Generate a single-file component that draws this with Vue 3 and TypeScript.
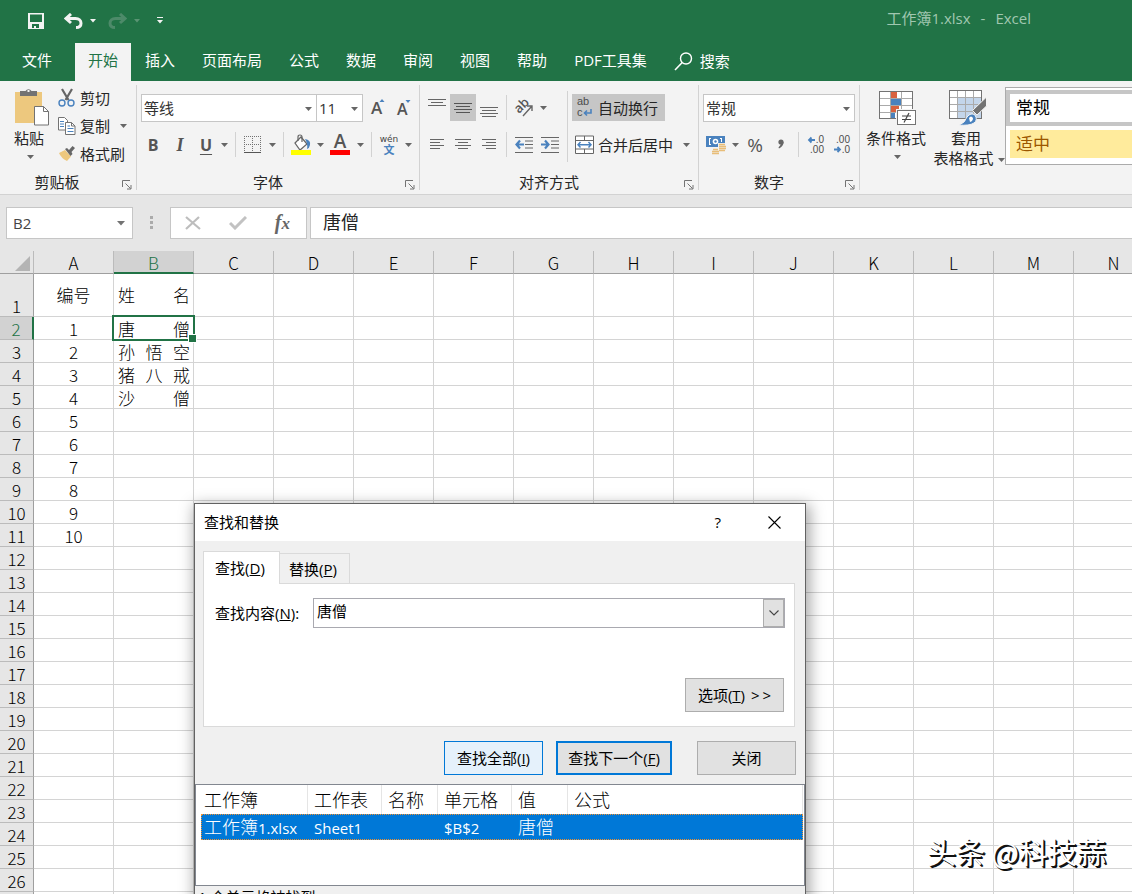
<script setup lang="ts">
import { ref } from 'vue'

const menuTabs: string[] = ['开始', '插入', '页面布局', '公式', '数据', '审阅', '视图', '帮助', 'PDF工具集']
const activeTab = ref('开始')

const columns: string[] = 'ABCDEFGHIJKLMN'.split('')
const names: Record<number, string> = { 1: '姓名', 2: '唐僧', 3: '孙悟空', 4: '猪八戒', 5: '沙僧' }
const rows: number[] = Array.from({ length: 27 }, (_, i) => i + 1)

function cellText(row: number, col: string): string {
  if (col === 'A') {
    if (row === 1) return '编号'
    return row <= 11 ? String(row - 1) : ''
  }
  return col === 'B' ? names[row] ?? '' : ''
}

const font = ref('等线')
const fontSize = ref('11')
const numberFormat = ref('常规')
const formula = ref('唐僧')
const keyword = ref('唐僧')
</script>

<template>
  <div class="app">
    <header class="titlebar">
      <div class="quick">
        <button class="q save" aria-label="保存">
          <svg width="16" height="16" viewBox="0 0 16 16"><path d="M0 0h16v16H0z M2 1.500v7.500h12V1.500z M4 11v4h2v-2h2v2h3v-4z" fill="#f3f3f3" fill-rule="evenodd" /></svg>
        </button>
        <button class="q undo" aria-label="撤销">
          <svg width="19" height="16" viewBox="0 0 19 16"><path d="M7 1L2 5.500L7 10M3 5.500H11.500C15 5.500 17 7.500 17 10.200C17 13 15 14.500 12 14.500" fill="none" stroke="#f3f3f3" stroke-width="3" /></svg>
        </button>
        <svg class="caret" width="6" height="4" viewBox="0 0 6 4"><path d="M0 0h6L3 3.500z" fill="#f3f3f3" /></svg>
        <button class="q redo" aria-label="恢复">
          <svg width="19" height="16" viewBox="0 0 19 16"><path d="M12 1L17 5.500L12 10M16 5.500H7.500C4 5.500 2 7.500 2 10.200C2 13 4 14.500 7 14.500" fill="none" stroke="#4d8a69" stroke-width="3" /></svg>
        </button>
        <svg class="caret" width="6" height="4" viewBox="0 0 6 4"><path d="M0 0h6L3 3.500z" fill="#5a9473" /></svg>
        <button class="q more" aria-label="自定义快速访问工具栏">
          <svg width="6" height="7" viewBox="0 0 6 7"><path d="M0 0h6v1H0zM0 3h6L3 6.500z" fill="#f3f3f3" /></svg>
        </button>
      </div>
      <div class="doc"><span>工作簿1.xlsx</span><span>-</span><span>Excel</span></div>
    </header>

    <nav class="tabs">
      <button class="tab file">文件</button>
      <button v-for="t in menuTabs" :key="t" class="tab" :class="{ active: t === activeTab }" @click="activeTab = t">{{ t }}</button>
      <button class="tab search">
        <svg width="19" height="19" viewBox="0 0 19 19"><circle cx="12" cy="6.500" r="5.500" fill="none" stroke="#fff" stroke-width="1.400" /><path d="M8.200 10.500L1 18" stroke="#fff" stroke-width="1.600" /></svg>
        搜索
      </button>
    </nav>

    <section class="ribbon">
      <div class="group">
        <div class="body clip">
          <button class="big paste">
            <svg width="36" height="38" viewBox="0 0 36 38">
              <rect x="1" y="4" width="27" height="31" fill="#edc87e" />
              <path d="M6 3h5.500a3.500 3.500 0 0 1 6 0H23v5H6z" fill="#737373" /><rect x="13.500" y="2" width="2" height="2" fill="#f3f3f3" />
              <path d="M20.500 18.500h9l5 5v13.500h-14z" fill="#fff" stroke="#737373" /><path d="M29.500 18.500v5h5" fill="none" stroke="#737373" />
            </svg>
            <span>粘贴</span>
            <svg class="dn" width="7" height="4" viewBox="0 0 7 4"><path d="M0 0h7L3.500 4z" fill="#666" /></svg>
          </button>
          <div class="stack">
            <button class="line">
              <svg width="18" height="20" viewBox="0 0 18 20"><path d="M4 1l6.500 11M14 1L7.500 12" stroke="#666" stroke-width="2.200" fill="none" /><circle cx="4" cy="15" r="3" fill="none" stroke="#4a82be" stroke-width="1.400" /><circle cx="13" cy="15" r="3" fill="none" stroke="#4a82be" stroke-width="1.400" /></svg>
              <span>剪切</span>
            </button>
            <button class="line">
              <svg width="18" height="20" viewBox="0 0 18 20"><path d="M.5 1.500h6l3 3v9.500h-9z" fill="#fff" stroke="#737373" /><path d="M2 5.500h4M2 8h4M2 10.500h4" stroke="#4a82be" /><path d="M7.500 6.500h6l3.500 3.500v8.500H7.500z" fill="#fff" stroke="#737373" /><path d="M13.500 6.500V10H17" fill="none" stroke="#737373" /><path d="M9.500 10h2.500M9.500 12.500h6M9.500 15.500h6" stroke="#4a82be" /></svg>
              <span>复制</span>
              <svg class="dn" width="7" height="4" viewBox="0 0 7 4"><path d="M0 0h7L3.500 4z" fill="#666" /></svg>
            </button>
            <button class="line">
              <svg width="18" height="20" viewBox="0 0 18 20"><path d="M1 9l6-3 6 6.500-4 4.500q-6-3-8-8z" fill="#edc87e" /><path d="M7 5l2-1 2 2 3.500-4 2.500 2-3.500 4 1 2-2 2z" fill="#666" /></svg>
              <span>格式刷</span>
            </button>
          </div>
        </div>
        <div class="foot"><span class="lab">剪贴板</span><button class="launch" aria-label="剪贴板设置"><svg width="10" height="10" viewBox="0 0 10 10"><path d="M.5 7V.5H8M3.500 3.500l5 5M9 5v4H5" fill="none" stroke="#737373" /></svg></button></div>
      </div>

      <div class="group g-font">
        <div class="body">
          <div class="row">
            <span class="sel s-font"><select v-model="font" aria-label="字体"><option>等线</option></select><svg width="7" height="4" viewBox="0 0 7 4"><path d="M0 0h7L3.500 4z" fill="#666" /></svg></span>
            <span class="sel s-size"><select v-model="fontSize" aria-label="字号"><option>11</option></select><svg width="7" height="4" viewBox="0 0 7 4"><path d="M0 0h7L3.500 4z" fill="#666" /></svg></span>
            <button class="t grow" aria-label="增大字号"><svg width="16" height="20" viewBox="0 0 16 20"><text x="0" y="16" class="it" font-size="17">A</text><path d="M8.500 4h5L11 1z" fill="#4a82be" /></svg></button>
            <button class="t" aria-label="减小字号"><svg width="16" height="20" viewBox="0 0 16 20"><text x="0" y="17" class="it" font-size="16">A</text><path d="M8.500 2h5L11 5z" fill="#4a82be" /></svg></button>
          </div>
          <div class="row">
            <button class="t b">B</button>
            <button class="t i w28">I</button>
            <button class="t u w24">U</button>
            <button class="a" aria-label="下划线选项"><svg width="7" height="4" viewBox="0 0 7 4"><path d="M0 0h7L3.500 4z" fill="#666" /></svg></button>
            <i class="sep" />
            <button class="t" aria-label="边框"><svg width="18" height="18" viewBox="0 0 18 18"><path d="M.5 0v16M8.500 0v16M16.500 0v16M0 .5h17M0 8.500h17" stroke="#737373" stroke-dasharray="1 1" /><path d="M0 16.500h17" stroke="#555" /></svg></button>
            <button class="a" aria-label="边框选项"><svg width="7" height="4" viewBox="0 0 7 4"><path d="M0 0h7L3.500 4z" fill="#666" /></svg></button>
            <i class="sep" />
            <button class="t" aria-label="填充颜色"><svg width="20" height="22" viewBox="0 0 20 22"><path d="M4 9l6-6 6 7-7 6z" fill="#fff" stroke="#666" stroke-width="1.200" /><path d="M7 7V3q0-2 2-2t2 2v5" fill="none" stroke="#666" stroke-width="1.200" /><path d="M14 5q6 1 5 6-.5 3-3 4 1-5-2-10z" fill="#4a82be" /><rect y="16" width="20" height="5" fill="#ff0" /></svg></button>
            <button class="a" aria-label="填充颜色选项"><svg width="7" height="4" viewBox="0 0 7 4"><path d="M0 0h7L3.500 4z" fill="#666" /></svg></button>
            <button class="t w28" aria-label="字体颜色"><svg width="20" height="22" viewBox="0 0 20 22"><text x="10" y="14" text-anchor="middle" class="it" font-size="19">A</text><rect y="16" width="20" height="5" fill="#f00" /></svg></button>
            <button class="a" aria-label="字体颜色选项"><svg width="7" height="4" viewBox="0 0 7 4"><path d="M0 0h7L3.500 4z" fill="#666" /></svg></button>
            <i class="sep" />
            <button class="t" aria-label="拼音"><svg width="18" height="22" viewBox="0 0 18 22"><text x="9" y="8" text-anchor="middle" font-size="9" class="py">wén</text><text x="9" y="20" text-anchor="middle" font-size="11" fill="#4a82be" font-weight="700">文</text></svg></button>
            <button class="a" aria-label="拼音选项"><svg width="7" height="4" viewBox="0 0 7 4"><path d="M0 0h7L3.500 4z" fill="#666" /></svg></button>
          </div>
        </div>
        <div class="foot"><span class="lab">字体</span><button class="launch" aria-label="字体设置"><svg width="10" height="10" viewBox="0 0 10 10"><path d="M.5 7V.5H8M3.500 3.500l5 5M9 5v4H5" fill="none" stroke="#737373" /></svg></button></div>
      </div>

      <div class="group g-align">
        <div class="body cols">
          <div class="col">
            <div class="row">
              <button class="t" aria-label="顶端对齐"><svg width="18" height="24" viewBox="0 0 18 24"><path d="M0 3.500h18M3 6.500h12M0 9.500h18" stroke="#666" /></svg></button>
              <button class="t on" aria-label="垂直居中"><svg width="18" height="24" viewBox="0 0 18 24"><path d="M0 7.500h18M2 10.500h14M0 13.500h18M2 16.500h14" stroke="#555" /></svg></button>
              <button class="t" aria-label="底端对齐"><svg width="18" height="24" viewBox="0 0 18 24"><path d="M0 11.500h18M2 14.500h14M0 17.500h18M2 20.500h14" stroke="#666" /></svg></button>
              <i class="sep" />
              <button class="t" aria-label="方向"><svg width="20" height="20" viewBox="0 0 20 20"><text transform="translate(5 16) rotate(-45)" font-size="13" class="it">ab</text><path d="M9 18L18 8M18 13V8h-5" fill="none" stroke="#666" stroke-width="1.400" /></svg></button>
              <button class="a" aria-label="方向选项"><svg width="7" height="4" viewBox="0 0 7 4"><path d="M0 0h7L3.500 4z" fill="#666" /></svg></button>
            </div>
            <div class="row">
              <button class="t" aria-label="左对齐"><svg width="14" height="14" viewBox="0 0 14 14"><path d="M0 1.500h14M0 4.500h10M0 7.500h14M0 10.500h10" stroke="#666" /></svg></button>
              <button class="t" aria-label="居中"><svg width="16" height="14" viewBox="0 0 16 14"><path d="M0 1.500h16M3 4.500h10M0 7.500h16M3 10.500h10" stroke="#666" /></svg></button>
              <button class="t" aria-label="右对齐"><svg width="14" height="14" viewBox="0 0 14 14"><path d="M0 1.500h14M4 4.500h10M0 7.500h14M4 10.500h10" stroke="#666" /></svg></button>
              <i class="sep" />
              <button class="t" aria-label="减少缩进"><svg width="18" height="18" viewBox="0 0 18 18"><path d="M0 1.500h18M10 5h8M10 8.500h8M10 12h8M0 16.500h18" stroke="#666" /><path d="M9 8.500H1.500M5 4.500L1.500 8.500 5 12.500" fill="none" stroke="#4a82be" stroke-width="2.200" /></svg></button>
              <button class="t" aria-label="增加缩进"><svg width="18" height="18" viewBox="0 0 18 18"><path d="M0 1.500h18M10 5h8M10 8.500h8M10 12h8M0 16.500h18" stroke="#666" /><path d="M0 8.500h7M4 4.500L7.500 8.500 4 12.500" fill="none" stroke="#4a82be" stroke-width="2.200" /></svg></button>
            </div>
          </div>
          <i class="tall" />
          <div class="col">
            <div class="row">
              <button class="wide on">
                <svg width="18" height="20" viewBox="0 0 18 20"><text x="2" y="7" font-size="11" class="it2">ab</text><text x="2" y="18" font-size="11" class="it2">c</text><path d="M16 11v4H9.500M12 12.500L9.500 15l2.500 2.500" fill="none" stroke="#4a82be" stroke-width="1.600" /></svg>
                <span>自动换行</span>
              </button>
            </div>
            <div class="row">
              <button class="wide">
                <svg width="18" height="20" viewBox="0 0 18 20"><path d="M.5 1h18v17.500H.5zM.5 5.500h18M.5 14h18M9.500 1v4.500M9.500 14v4.500" fill="#fff" stroke="#666" /><path d="M3 9.750h13M5.500 7L3 9.750 5.500 12.500M13.500 7L16 9.750 13.500 12.500" fill="none" stroke="#4a82be" stroke-width="1.500" /></svg>
                <span>合并后居中</span>
              </button>
              <button class="a" aria-label="合并选项"><svg width="7" height="4" viewBox="0 0 7 4"><path d="M0 0h7L3.500 4z" fill="#666" /></svg></button>
            </div>
          </div>
        </div>
        <div class="foot"><span class="lab">对齐方式</span><button class="launch" aria-label="对齐设置"><svg width="10" height="10" viewBox="0 0 10 10"><path d="M.5 7V.5H8M3.500 3.500l5 5M9 5v4H5" fill="none" stroke="#737373" /></svg></button></div>
      </div>

      <div class="group g-num">
        <div class="body">
          <div class="row">
            <span class="sel s-num"><select v-model="numberFormat" aria-label="数字格式"><option>常规</option></select><svg width="7" height="4" viewBox="0 0 7 4"><path d="M0 0h7L3.500 4z" fill="#666" /></svg></span>
          </div>
          <div class="row">
            <button class="t" aria-label="会计数字格式"><svg width="20" height="20" viewBox="0 0 20 20"><rect y="1" width="19" height="11" fill="#4a82be" /><path d="M3 3h2v1H4v5h1v1H3zM16 3h-2v1h1v3h1z" fill="#fff" /><circle cx="9.500" cy="6.500" r="2.800" fill="#fff" /><circle cx="9.500" cy="6.500" r="1.200" fill="#4a82be" /><path d="M12 8h8v12H6v-7h6z" fill="#f3f3f3" /><path d="M13 9.500h6M13 11.500h7M13 13.500h7M13 15.500h6M7 14.500h5M6 16.500h7M6 18.500h7" stroke="#e8bd78" stroke-width="1.400" /></svg></button>
            <button class="a" aria-label="会计格式选项"><svg width="7" height="4" viewBox="0 0 7 4"><path d="M0 0h7L3.500 4z" fill="#666" /></svg></button>
            <button class="t w28 pct">%</button>
            <button class="t w24" aria-label="千位分隔样式"><svg width="6" height="12" viewBox="0 0 6 12"><circle cx="3" cy="3" r="2.600" fill="#666" /><path d="M5.600 3Q5.500 7 1 9.500L.5 8.500Q3 6.500 3 4z" fill="#666" /></svg></button>
            <i class="sep" />
            <button class="t" aria-label="增加小数位数"><svg width="18" height="20" viewBox="0 0 18 20"><text x="17" y="8" text-anchor="end" font-size="10" class="it2">.0</text><text x="17" y="18" text-anchor="end" font-size="10" class="it2">.00</text><path d="M8 5H2M4.500 2.500L2 5 4.500 7.500" fill="none" stroke="#4a82be" stroke-width="1.800" /></svg></button>
            <button class="t" aria-label="减少小数位数"><svg width="18" height="20" viewBox="0 0 18 20"><text x="17" y="8" text-anchor="end" font-size="10" class="it2">.00</text><text x="17" y="18" text-anchor="end" font-size="10" class="it2">.0</text><path d="M1 14.500h6M4.500 12L7 14.500 4.500 17" fill="none" stroke="#4a82be" stroke-width="1.800" /></svg></button>
          </div>
        </div>
        <div class="foot"><span class="lab">数字</span><button class="launch" aria-label="数字设置"><svg width="10" height="10" viewBox="0 0 10 10"><path d="M.5 7V.5H8M3.500 3.500l5 5M9 5v4H5" fill="none" stroke="#737373" /></svg></button></div>
      </div>

      <div class="styles">
        <button class="big cond">
          <svg width="38" height="38" viewBox="0 0 38 38">
            <rect x=".5" y="3.500" width="33" height="27" fill="#fff" />
            <path d="M11 4h7v6h-7zM11 18h9v6h-9z" fill="#d9623f" /><path d="M11 11h11v6H11zM11 25h5v6h-5z" fill="#4a82be" />
            <path d="M11.500 3.500v27M22.500 3.500v27M.5 10.500h33M.5 17.500h33M.5 24.500h33" stroke="#aaa" fill="none" /><rect x=".5" y="3.500" width="33" height="27" fill="none" stroke="#737373" />
            <rect x="17" y="21" width="21" height="17" fill="#f3f3f3" /><rect x="18.500" y="22.500" width="18" height="14" fill="#fff" stroke="#737373" /><path d="M23 28h9M23 31.500h9M30 25l-5 9.500" stroke="#444" stroke-width="1.200" />
          </svg>
          <span>条件格式</span>
          <svg class="dn" width="7" height="4" viewBox="0 0 7 4"><path d="M0 0h7L3.500 4z" fill="#666" /></svg>
        </button>
        <button class="big tblfmt">
          <svg width="38" height="38" viewBox="0 0 38 38">
            <rect x=".5" y="2.500" width="32" height="28" fill="#fff" /><rect x="9" y="10" width="23" height="20" fill="#c3d5ea" />
            <path d="M8.500 2.500v28M16.500 2.500v28M24.500 2.500v28M.5 9.500h32M.5 16.500h32M.5 23.500h32" stroke="#aaa" fill="none" /><rect x=".5" y="2.500" width="32" height="28" fill="none" stroke="#737373" />
            <path d="M37.500 9v9L28 27l-4.500-4.500z" fill="#737373" stroke="#f3f3f3" /><path d="M10 37q6-2 8-8 4-5 8-2 3 5-1 8-5 3-15 2z" fill="#4a82be" stroke="#f3f3f3" /><path d="M20 30q2-3 4 0 0 3-3 4" fill="#fff" />
          </svg>
          <span>套用</span>
          <span class="second">表格格式<svg width="7" height="4" viewBox="0 0 7 4"><path d="M0 0h7L3.500 4z" fill="#666" /></svg></span>
        </button>
        <div class="gallery">
          <button class="style normal">常规</button>
          <button class="style neutral">适中</button>
        </div>
      </div>
    </section>

    <section class="fbar">
      <div class="namebox"><input value="B2" aria-label="名称框" /><svg width="8" height="5" viewBox="0 0 8 5"><path d="M0 0h8L4 4.500z" fill="#737373" /></svg></div>
      <svg class="dots" width="3" height="13" viewBox="0 0 3 13"><path d="M0 0h3v3H0zM0 5h3v3H0zM0 10h3v3H0z" fill="#ababab" /></svg>
      <div class="fx">
        <button aria-label="取消"><svg width="16" height="14" viewBox="0 0 16 14"><path d="M1 1l14 12M14 1L1 13" stroke="#bdbdbd" stroke-width="2.200" /></svg></button>
        <button aria-label="输入"><svg width="18" height="14" viewBox="0 0 18 14"><path d="M1 7l5 5L17 1" fill="none" stroke="#c2c2c2" stroke-width="3" /></svg></button>
        <button class="fxb">f<small>x</small></button>
      </div>
      <input v-model="formula" class="formula" aria-label="编辑栏" />
    </section>

    <main class="sheet">
      <table class="grid">
        <colgroup><col class="c0" /><col v-for="c in columns" :key="c" class="c1" /></colgroup>
        <thead>
          <tr>
            <th class="corner"><svg width="15" height="15" viewBox="0 0 15 15"><path d="M15 0v15H0z" fill="#b4b4b4" /></svg></th>
            <th v-for="c in columns" :key="c" :class="{ sel: c === 'B' }">{{ c }}</th>
          </tr>
        </thead>
        <tbody>
          <tr v-for="r in rows" :key="r" :class="{ first: r === 1 }">
            <th :class="{ sel: r === 2 }">{{ r < 27 ? r : '' }}</th>
            <td v-for="c in columns" :key="c" :class="{ name: c === 'B', cur: c === 'B' && r === 2 }">{{ cellText(r, c) }}<i v-if="c === 'B' && r === 2" class="box" /></td>
          </tr>
        </tbody>
      </table>
    </main>

    <div class="mark">头条 @科技蒜</div>

    <section class="dialog" role="dialog" aria-label="查找和替换">
      <div class="dtitle">
        <h2>查找和替换</h2>
        <button class="help">?</button>
        <button class="close" aria-label="关闭窗口"><svg width="13" height="13" viewBox="0 0 13 13"><path d="M.5 .5l12 12M12.500 .5l-12 12" stroke="#000" stroke-width="1.100" /></svg></button>
      </div>
      <div class="dtabs">
        <button class="dt sel">查找(<u>D</u>)</button>
        <button class="dt">替换(<u>P</u>)</button>
      </div>
      <div class="panel">
        <div class="field">
          <label for="kw">查找内容(<u>N</u>):</label>
          <div class="combo">
            <input id="kw" v-model="keyword" />
            <button aria-label="展开历史"><svg width="10" height="6" viewBox="0 0 10 6"><path d="M.5 .5L5 5 9.500 .5" fill="none" stroke="#444" stroke-width="1.100" /></svg></button>
          </div>
        </div>
        <button class="btn opt">选项(<u>T</u>) <span class="more-sign"><span>&gt;</span><span>&gt;</span></span></button>
      </div>
      <div class="actions">
        <button class="btn all">查找全部(<u>I</u>)</button>
        <button class="btn next">查找下一个(<u>F</u>)</button>
        <button class="btn shut">关闭</button>
      </div>
      <div class="list">
        <table>
          <colgroup><col class="k1" /><col class="k2" /><col class="k3" /><col class="k2" /><col class="k3" /><col /></colgroup>
          <thead><tr><th>工作簿</th><th>工作表</th><th>名称</th><th>单元格</th><th>值</th><th>公式</th></tr></thead>
          <tbody><tr><td>工作簿<span class="lat">1.xlsx</span></td><td><span class="lat">Sheet1</span></td><td></td><td><span class="lat">$B$2</span></td><td>唐僧</td><td></td></tr></tbody>
        </table>
      </div>
      <div class="status">1 个单元格被找到</div>
    </section>
  </div>
</template>

<style>
html,
body {
  margin: 0;
  overflow: hidden;
}
</style>

<style scoped>
.app {
  position: relative;
  display: flex;
  flex-direction: column;
  height: 100vh;
  overflow: hidden;
  background: #fff;
  color: #262626;
  font: 15px/20px "Open Sans", "Noto Sans CJK SC", sans-serif;
}
* {
  box-sizing: border-box;
}
button,
input,
select {
  margin: 0;
  padding: 0;
  border: 0;
  border-radius: 0;
  background: none;
  color: inherit;
  font: inherit;
  outline: 0;
}
svg {
  display: block;
  flex: none;
}
.titlebar {
  display: flex;
  flex: none;
  justify-content: space-between;
  height: 43px;
  padding: 0 101px 0 28px;
  background: #217346;
}
.quick {
  display: flex;
  align-items: center;
  height: 41px;
}
.save { margin-right: 20px; }
.undo, .redo { margin-right: 7px; }
.redo { margin-left: 12px; }
.more { margin-left: 17px; }
.doc {
  display: flex;
  gap: 10px;
  padding-top: 8px;
  color: #a0c7b0;
}
.tabs {
  display: flex;
  flex: none;
  gap: 1px;
  height: 38px;
  background: #217346;
}
.tab {
  padding: 0 13px 4px;
  color: #fff;
  white-space: nowrap;
}
.tab.file { width: 74px; }
.tab.active {
  background: #f3f3f3;
  color: #217346;
}
.tab.search {
  display: flex;
  align-items: center;
  gap: 7px;
  padding-bottom: 2px;
}
.ribbon {
  display: flex;
  flex: none;
  height: 114px;
  padding-top: 4px;
  border-bottom: 1px solid #d2d2d2;
  background: #f3f3f3;
}
.group {
  display: flex;
  flex: none;
  flex-direction: column;
  justify-content: space-between;
  height: 105px;
  border-right: 1px solid #d2d2d2;
}
.body {
  height: 84px;
  padding: 9px 4px 0 3px;
}
.body.clip {
  display: flex;
  width: 136px;
  padding: 0;
}
.foot {
  position: relative;
  display: flex;
  justify-content: center;
  height: 18px;
}
.lab { padding-right: 22px; }
.g-font .lab, .g-align .lab, .g-num .lab { padding-right: 20px; }
.launch {
  position: absolute;
  right: 4px;
  bottom: 0;
}
.big {
  display: flex;
  flex-direction: column;
  align-items: center;
  flex: none;
  white-space: nowrap;
}
.big svg { margin-bottom: 2px; }
.big .dn { margin: 7px 0 0 3px; }
.paste {
  width: 58px;
  padding: 3px 0 0;
}
.paste svg:first-child { margin-left: 6px; }
.stack {
  display: flex;
  flex-direction: column;
  margin-top: -1px;
}
.line {
  display: flex;
  align-items: center;
  height: 28px;
  gap: 4px;
}
.line .dn { margin-left: 6px; }
.row {
  display: flex;
  align-items: center;
  height: 27px;
  margin-bottom: 10px;
}
.row svg { overflow: visible; }
.t {
  display: flex;
  align-items: center;
  justify-content: center;
  flex: none;
  width: 26px;
  height: 27px;
}
.w28 { width: 28px; }
.w24 { width: 24px; }
.a {
  display: flex;
  align-items: center;
  justify-content: center;
  width: 12px;
  height: 27px;
}
.sep {
  width: 1px;
  height: 25px;
  margin: 0 4px 0 5px;
  background: #d2d2d2;
}
.tall {
  width: 1px;
  height: 71px;
  margin: -3px 4px 0;
  background: #d2d2d2;
}
.on { background: #c6c6c6; }
.it {
  fill: #555;
  font-family: "Open Sans", sans-serif;
  font-weight: 600;
}
.it2 {
  fill: #4d4d4d;
  font-family: "Liberation Sans", sans-serif;
}
.py {
  fill: #444;
  font-family: "DejaVu Sans", sans-serif;
}
.b, .i, .u {
  color: #555;
  font-size: 16px;
  font-weight: 700;
}
.i {
  font-family: "Liberation Serif", serif;
  font-size: 18px;
  font-style: italic;
}
.u {
  text-decoration: underline;
  text-decoration-thickness: 1px;
  text-underline-offset: 3px;
}
.pct {
  color: #555;
  font-size: 19px;
}
.row .sel {
  position: relative;
  display: flex;
  flex: none;
  height: 28px;
  border: 1px solid #c6c6c6;
  background: #fff;
}
.row .sel select {
  width: 100%;
  padding-left: 2px;
  appearance: none;
  color: #333;
}
.row .sel svg {
  position: absolute;
  right: 4px;
  top: 12px;
  pointer-events: none;
}
.row .s-font {
  width: 176px;
  margin-left: 1px;
}
.row .s-size {
  width: 47px;
  margin-left: -1px;
}
.grow { margin-left: 3px; }
.g-font { width: 283px; }
.g-align { width: 279px; }
.g-num { width: 161px; }
.g-align .body, .g-num .body { padding-left: 4px; }
.cols { display: flex; }
.g-align .sep { margin: 0 4px; }
.wide {
  display: flex;
  align-items: center;
  gap: 5px;
  height: 27px;
  padding: 0 7px 0 3px;
  white-space: nowrap;
}
.row .s-num { width: 152px; }
.styles {
  display: flex;
  flex: 1 0 auto;
  align-items: flex-start;
}
.cond {
  width: 72px;
  padding-top: 3px;
}
.cond svg:first-child { margin-left: 4px; }
.tblfmt {
  width: 74px;
  padding: 3px 6px 0 0;
}
.tblfmt svg:first-child { margin-left: 4px; }
.second {
  display: flex;
  align-items: center;
  gap: 4px;
  margin-right: -6px;
}
.tblfmt .second svg { margin: 4px 0 0; }
.gallery {
  display: flex;
  flex: 1;
  flex-direction: column;
  gap: 4px;
  height: 78px;
  margin: 2px 0 0 -1px;
  padding-top: 2px;
  border: 1px solid #ababab;
  border-right: 0;
  background: #fff;
}
.style {
  padding-left: 6px;
  font-size: 17px;
  text-align: left;
}
.normal {
  height: 36px;
  border: 4px solid #c6c6c6;
  border-right: 0;
  color: #000;
}
.neutral {
  height: 28px;
  margin-left: 4px;
  background: #ffeb9c;
  color: #9c5700;
}
.fbar {
  display: flex;
  flex: none;
  align-items: flex-start;
  height: 56px;
  padding: 12px 0 0 6px;
  background: #e6e6e6;
}
.namebox {
  display: flex;
  align-items: center;
  width: 127px;
  height: 32px;
  padding: 0 7px 0 6px;
  border: 1px solid #c6c6c6;
  background: #fff;
}
.namebox input {
  flex: 1;
  min-width: 0;
  color: #444;
}
.dots { margin: 9px 17px 0; }
.fx {
  display: flex;
  align-items: center;
  justify-content: space-between;
  width: 137px;
  height: 32px;
  margin-right: 3px;
  padding: 0 16px 0 14px;
  border: 1px solid #c6c6c6;
  background: #fff;
}
.fxb {
  color: #666;
  font: italic 700 20px/24px "Liberation Serif", serif;
}
.fxb small { font-size: 17px; }
.formula {
  flex: 1;
  height: 32px;
  padding: 0 12px 4px;
  border: 1px solid #c6c6c6;
  border-right: 0;
  background: #fff;
  font-size: 18px;
}
.sheet {
  flex: 1;
  min-height: 0;
}
.grid {
  width: 1154px;
  border-spacing: 0;
  table-layout: fixed;
  color: #000;
  font: 17px/20px "Noto Sans CJK SC", sans-serif;
  font-weight: 300;
}
.c0 { width: 34px; }
.c1 { width: 80px; }
.grid th,
.grid td {
  height: 23px;
  padding: 2px 0 0;
  border-right: 1px solid #d4d4d4;
  border-bottom: 1px solid #d4d4d4;
  font-weight: 300;
  text-align: center;
}
.grid th { background: #e6e6e6; }
.grid thead th {
  border-right-color: #bbb;
  border-bottom-color: #9f9f9f;
}
.grid thead th.sel {
  border-bottom: 2px solid #217346;
  line-height: 19px;
}
.grid tbody th {
  border-right-color: #9f9f9f;
  border-bottom-color: #bbb;
}
.grid th.sel {
  background: #d2d2d2;
  color: #217346;
}
.grid tbody th.sel { border-right: 2px solid #217346; }
.grid .corner svg { margin: 0 3px 0 15px; }
.grid .first th {
  height: 43px;
  vertical-align: bottom;
}
.grid .name {
  padding: 2px 3px 0 4px;
  text-align: justify;
  text-align-last: justify;
  text-justify: inter-character;
}
.grid .first td { padding-top: 0; }
.grid .cur { position: relative; }
.box {
  position: absolute;
  inset: -2px;
  border: 2px solid #217346;
}
.box::after {
  position: absolute;
  right: -4px;
  bottom: -4px;
  width: 7px;
  height: 7px;
  border: 1px solid #fff;
  background: #217346;
  content: "";
}
.mark {
  position: absolute;
  right: 26px;
  bottom: 23px;
  color: #fff;
  font: 29px/40px "Noto Sans CJK SC", sans-serif;
  text-shadow: 1px 1px 0 #111, 2px 2px 0 #111;
}
.dialog {
  position: absolute;
  top: 503px;
  left: 194px;
  width: 612px;
  border: 1px solid #626262;
  background: #f0f0f0;
  box-shadow: 2px 4px 14px 2px rgba(0, 0, 0, 0.35);
  color: #000;
}
.dtitle {
  display: flex;
  align-items: center;
  height: 37px;
  padding: 0 24px 1px 9px;
  background: #fff;
}
.dtitle h2 {
  flex: 1;
  margin: 0;
  font-size: 15px;
  font-weight: 400;
}
.help { margin-right: 47px; }
.dtabs {
  display: flex;
  align-items: flex-end;
  height: 42px;
  padding-left: 8px;
}
.dt {
  width: 70px;
  height: 30px;
  padding-right: 3px;
  border: 1px solid #dadada;
  border-left: 0;
  border-bottom: 0;
}
.dt.sel {
  position: relative;
  z-index: 1;
  width: 77px;
  height: 33px;
  margin-bottom: -1px;
  padding-bottom: 1px;
  border-left: 1px solid #dadada;
  background: #fff;
}
.panel {
  display: flex;
  flex-direction: column;
  justify-content: space-between;
  height: 144px;
  margin: 0 10px 0 8px;
  padding: 14px 9px 14px 11px;
  border: 1px solid #dadada;
  background: #fff;
}
.field {
  display: flex;
  align-items: center;
}
.field label { width: 98px; }
.combo {
  display: flex;
  flex: 1;
  height: 30px;
  border: 1px solid #a9a9b0;
}
.combo input {
  flex: 1;
  min-width: 0;
  padding: 0 3px 4px;
}
.combo button {
  display: flex;
  align-items: center;
  justify-content: center;
  width: 21px;
  border: 1px solid #adadad;
  background: #e1e1e1;
}
.btn {
  height: 34px;
  border: 1px solid #adadad;
  background: #e1e1e1;
}
.opt {
  align-self: flex-end;
  width: 99px;
  margin-right: 1px;
}
.more-sign {
  display: inline-flex;
  gap: 3px;
  margin-left: 2px;
}
.actions {
  display: flex;
  justify-content: flex-end;
  padding: 14px 9px 9px;
}
.all {
  width: 99px;
  margin-right: 13px;
  border-color: #0078d7;
  background: #e5f1fb;
}
.next {
  width: 116px;
  margin-right: 25px;
  border: 2px solid #0078d7;
}
.shut { width: 99px; }
.list {
  height: 102px;
  padding: 0 1px 0 5px;
  border: 1px solid #828790;
  background: #fff;
}
.list table {
  width: 100%;
  border-spacing: 0;
  table-layout: fixed;
  font-size: 18px;
  line-height: 24px;
}
.k1 { width: 107px; }
.k2 { width: 74px; }
.k3 { width: 56px; }
.list th,
.list td {
  padding: 0 0 0 6px;
  font-weight: 300;
  text-align: left;
  white-space: nowrap;
}
.list th {
  height: 29px;
  padding-top: 1px;
  border-right: 1px solid #e5e5e5;
}
.list th:first-child,
.list td:first-child { padding-left: 3px; }
.list td {
  height: 26px;
  background: #0078d7;
  color: #fff;
}
.list tbody tr {
  outline: 1px dotted #f09030;
  outline-offset: -1px;
}
.lat {
  font-size: 15px;
  font-weight: 400;
}
.status {
  height: 30px;
  padding-left: 3px;
  line-height: 22px;
}
</style>
